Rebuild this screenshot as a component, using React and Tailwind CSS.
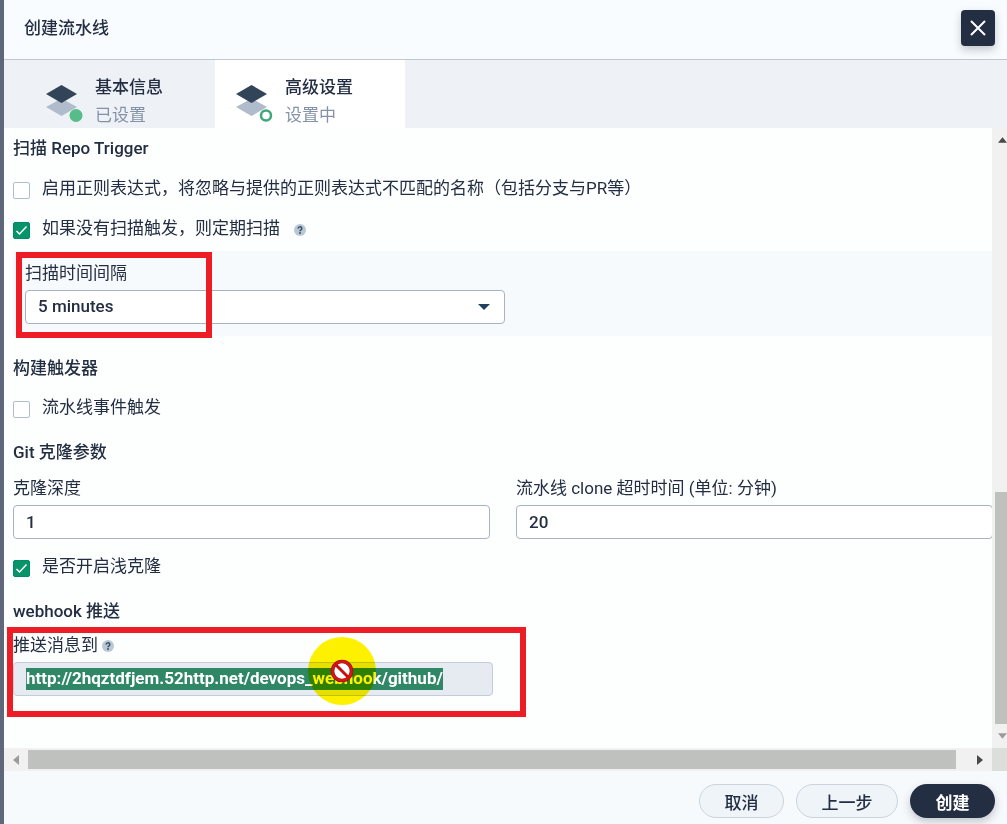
import { useState } from 'react';

const FIELD = 'h-[34px] rounded border border-[#a9b2c3] bg-white px-3 text-[17px] font-medium text-[#242e42] outline-none';

function LayersIcon({ done }) {
  return (
    <svg width="38" height="38" viewBox="0 0 38 38" aria-hidden="true">
      <path d="M1 23 16.500 14.500 32 23 16.500 32Z" fill="#b0bccb" />
      <path d="M1 10 16.500 1 32 10 16.500 19Z" fill="#324558" />
      {done ? (
        <circle cx="31" cy="31.500" r="6.500" fill="#55bc8a" />
      ) : (
        <circle cx="31" cy="31.500" r="5" fill="#fff" stroke="#3aa878" strokeWidth="2.500" />
      )}
    </svg>
  );
}

function Tab({ title, status, active, done }) {
  return (
    <button
      type="button"
      role="tab"
      aria-selected={active}
      className={
        active
          ? 'flex w-[190px] items-start gap-3 bg-white pl-5 text-left'
          : 'flex w-[211px] items-start gap-3 pl-[41px] text-left'
      }
    >
      <span className="pt-6">
        <LayersIcon done={done} />
      </span>
      <span className="flex flex-col pt-[13px] text-[17px] leading-7">
        <span className="font-medium text-[#242e42]">{title}</span>
        <span className="text-[#8592a8]">{status}</span>
      </span>
    </button>
  );
}

function HelpIcon() {
  return (
    <svg width="12" height="12" viewBox="0 0 12 12" className="shrink-0" aria-hidden="true">
      <circle cx="6" cy="6" r="6" fill="#b8c8d6" />
      <path d="M4.200 4.600a1.800 1.700 0 1 1 2.500 1.500c-.5.3-.7.5-.7 1.100" fill="none" stroke="#324558" strokeWidth="1.400" />
      <circle cx="6" cy="9" r=".9" fill="#324558" />
    </svg>
  );
}

function Check({ label, defaultChecked, help }) {
  return (
    <label className="flex h-6 items-center text-[17px] text-[#242e42]">
      <span className="relative mt-0.5 mr-3 h-[17px] w-[17px]">
        <input
          type="checkbox"
          defaultChecked={defaultChecked}
          className="peer block h-[17px] w-[17px] appearance-none rounded-xs border border-[#b4bccc] bg-white checked:border-[#00896a] checked:bg-[#069468]"
        />
        <svg
          viewBox="0 0 17 17"
          className="pointer-events-none absolute inset-0 hidden peer-checked:block"
          aria-hidden="true"
        >
          <path d="m3.500 9 3 3 7-7.500" fill="none" stroke="#fff" strokeWidth="1.500" />
        </svg>
      </span>
      <span>{label}</span>
      {help && (
        <span className="mt-0.5 ml-3.5">
          <HelpIcon />
        </span>
      )}
    </label>
  );
}

function Heading({ children }) {
  return <h2 className="h-6 text-[17px] leading-6 font-medium text-[#242e42]">{children}</h2>;
}

function Arrow({ d, color }) {
  return (
    <svg width="10" height="10" viewBox="0 0 10 10" aria-hidden="true">
      <path d={d} fill={color} />
    </svg>
  );
}

function ForbiddenCursor() {
  return (
    <div className="pointer-events-none absolute top-1 left-[295px] h-[68px] w-[68px]">
      <svg viewBox="0 0 68 68" className="absolute inset-0 mix-blend-multiply" aria-hidden="true">
        <circle cx="34" cy="34" r="34" fill="#fff200" />
      </svg>
      <svg viewBox="0 0 68 68" className="absolute inset-0" aria-hidden="true">
        <circle cx="34" cy="34" r="9.500" fill="#fff" stroke="#8a1010" strokeWidth="3.600" />
        <circle cx="34" cy="34" r="9.500" fill="none" stroke="#dc1414" strokeWidth="2.400" />
        <path d="m27.500 27.500 13 13" stroke="#c81010" strokeWidth="3" />
      </svg>
    </div>
  );
}

export default function App() {
  const [depth, setDepth] = useState('1');
  const [timeout, setTimeoutValue] = useState('20');

  return (
    <div className="flex h-screen border-l-4 border-[#5f677a] bg-[#fdfefe] font-[Roboto,'Noto_Sans_CJK_SC',sans-serif] text-[#242e42]">
      <main className="flex min-w-0 flex-1 flex-col">
        <header className="flex h-[60px] shrink-0 items-start justify-between border-b border-[#c0c8d5] bg-[#f9fcfe] pt-2.5 pr-3 pl-5">
          <h1 className="text-[17px] leading-9 font-medium">创建流水线</h1>
          <button
            type="button"
            aria-label="关闭"
            className="flex h-9 w-[34px] items-center justify-center rounded bg-[#242e42] shadow-[0_4px_8px_rgba(36,46,66,0.25)]"
          >
            <svg width="16" height="16" viewBox="0 0 16 16" aria-hidden="true">
              <path d="m1 1 14 14M15 1 1 15" stroke="#fff" strokeWidth="2" />
            </svg>
          </button>
        </header>

        <div role="tablist" className="flex h-[68px] shrink-0 overflow-hidden bg-[#eef2f6]">
          <Tab title="基本信息" status="已设置" done />
          <Tab title="高级设置" status="设置中" active />
        </div>

        <div className="flex min-h-0 flex-1">
          <div className="flex min-w-0 flex-1 flex-col">
            <div className="min-h-0 flex-1 overflow-hidden pt-2 pl-[9px]">
              <Heading>扫描 Repo Trigger</Heading>
              <div className="mt-[17px] flex flex-col gap-4">
                <Check label="启用正则表达式，将忽略与提供的正则表达式不匹配的名称（包括分支与PR等）" />
                <Check label="如果没有扫描触发，则定期扫描" defaultChecked help />
              </div>

              <section className="relative mt-2.5 bg-[#f7fafc] pt-2.5 pb-3 pl-3">
                <label htmlFor="interval" className="block h-6 text-[17px] leading-6">
                  扫描时间间隔
                </label>
                <div className="relative mt-[5px] w-[480px]">
                  <select id="interval" className={`${FIELD} w-full appearance-none`}>
                    <option>5 minutes</option>
                  </select>
                  <svg
                    width="12"
                    height="6"
                    viewBox="0 0 12 6"
                    className="pointer-events-none absolute top-[14px] right-[15px]"
                    aria-hidden="true"
                  >
                    <path d="M0 0h12L6 6Z" fill="#1f4060" />
                  </svg>
                </div>
                <div className="pointer-events-none absolute top-px left-[3px] h-[86px] w-[196px] border-6 border-[#ee1c25]" />
              </section>

              <div className="mt-5">
                <Heading>构建触发器</Heading>
              </div>
              <div className="mt-4">
                <Check label="流水线事件触发" />
              </div>

              <div className="mt-5">
                <Heading>Git 克隆参数</Heading>
              </div>
              <div className="mt-3 -mr-px grid grid-cols-2 gap-[26px]">
                <div className="flex flex-col gap-[5px]">
                  <label htmlFor="depth" className="h-6 text-[17px] leading-6">
                    克隆深度
                  </label>
                  <input id="depth" value={depth} onChange={(e) => setDepth(e.target.value)} className={FIELD} />
                </div>
                <div className="flex flex-col gap-[5px]">
                  <label htmlFor="timeout" className="h-6 text-[17px] leading-6">
                    流水线 clone 超时时间 (单位: 分钟)
                  </label>
                  <input
                    id="timeout"
                    value={timeout}
                    onChange={(e) => setTimeoutValue(e.target.value)}
                    className={FIELD}
                  />
                </div>
              </div>
              <div className="mt-4">
                <Check label="是否开启浅克隆" defaultChecked />
              </div>

              <div className="mt-5">
                <Heading>webhook 推送</Heading>
              </div>
              <section className="relative mt-2.5">
                <div className="flex h-6 items-center gap-1">
                  <label htmlFor="webhook" className="text-[17px] leading-6">
                    推送消息到
                  </label>
                  <span className="mt-0.5">
                    <HelpIcon />
                  </span>
                </div>
                <div className="mt-[5px] flex h-[34px] w-[480px] items-center rounded border border-[#c3ccd8] bg-[#e6ebf2] pl-3">
                  <input
                    id="webhook"
                    readOnly
                    value="http://2hqztdfjem.52http.net/devops_webhook/github/"
                    className="field-sizing-content h-[22px] bg-[#2f8766] text-[17px] font-bold text-white outline-none"
                  />
                </div>
                <div className="pointer-events-none absolute -top-1.5 -left-1.5 h-[90px] w-[519px] border-6 border-[#ee1c25]" />
                <ForbiddenCursor />
              </section>
            </div>

            <div className="flex h-[23px] shrink-0 items-center bg-[#f0f1f0]">
              <span className="flex w-6 justify-center">
                <Arrow d="M8 0v10L2 5Z" color="#9a9c9a" />
              </span>
              <div className="mr-3 h-[19px] flex-1 bg-[#bfc1be]" />
              <span className="flex w-6 justify-center">
                <Arrow d="M2 0v10l6-5Z" color="#484a48" />
              </span>
            </div>
          </div>

          <div className="flex w-[15px] shrink-0 flex-col overflow-hidden bg-[#f0f1f0]">
            <span className="flex h-6 items-center pl-1.5">
              <Arrow d="M0 8h10L5 2Z" color="#484a48" />
            </span>
            <div className="flex flex-1 flex-col justify-end pl-[3px]">
              <div className="h-[232px] bg-[#bfc1be]" />
            </div>
            <span className="flex h-6 items-center pl-1.5">
              <Arrow d="M0 2h10L5 8Z" color="#9a9c9a" />
            </span>
            <div className="h-[23px] bg-[#dcdedc]" />
          </div>
        </div>

        <footer className="flex h-[53px] shrink-0 items-start justify-end gap-3 bg-[#f7fafc] pt-[13px] pr-3 text-[17px] font-medium">
          <button type="button" className="h-[34px] w-[85px] rounded-full border border-[#ccd3df] bg-[#eff4f9] pt-1.5">
            取消
          </button>
          <button type="button" className="h-[34px] w-[102px] rounded-full border border-[#ccd3df] bg-[#eff4f9] pt-1.5">
            上一步
          </button>
          <button
            type="button"
            className="h-[34px] w-[85px] rounded-full bg-[#242e42] pt-1.5 font-bold text-white shadow-[0_4px_8px_rgba(36,46,66,0.25)]"
          >
            创建
          </button>
        </footer>
      </main>
    </div>
  );
}
